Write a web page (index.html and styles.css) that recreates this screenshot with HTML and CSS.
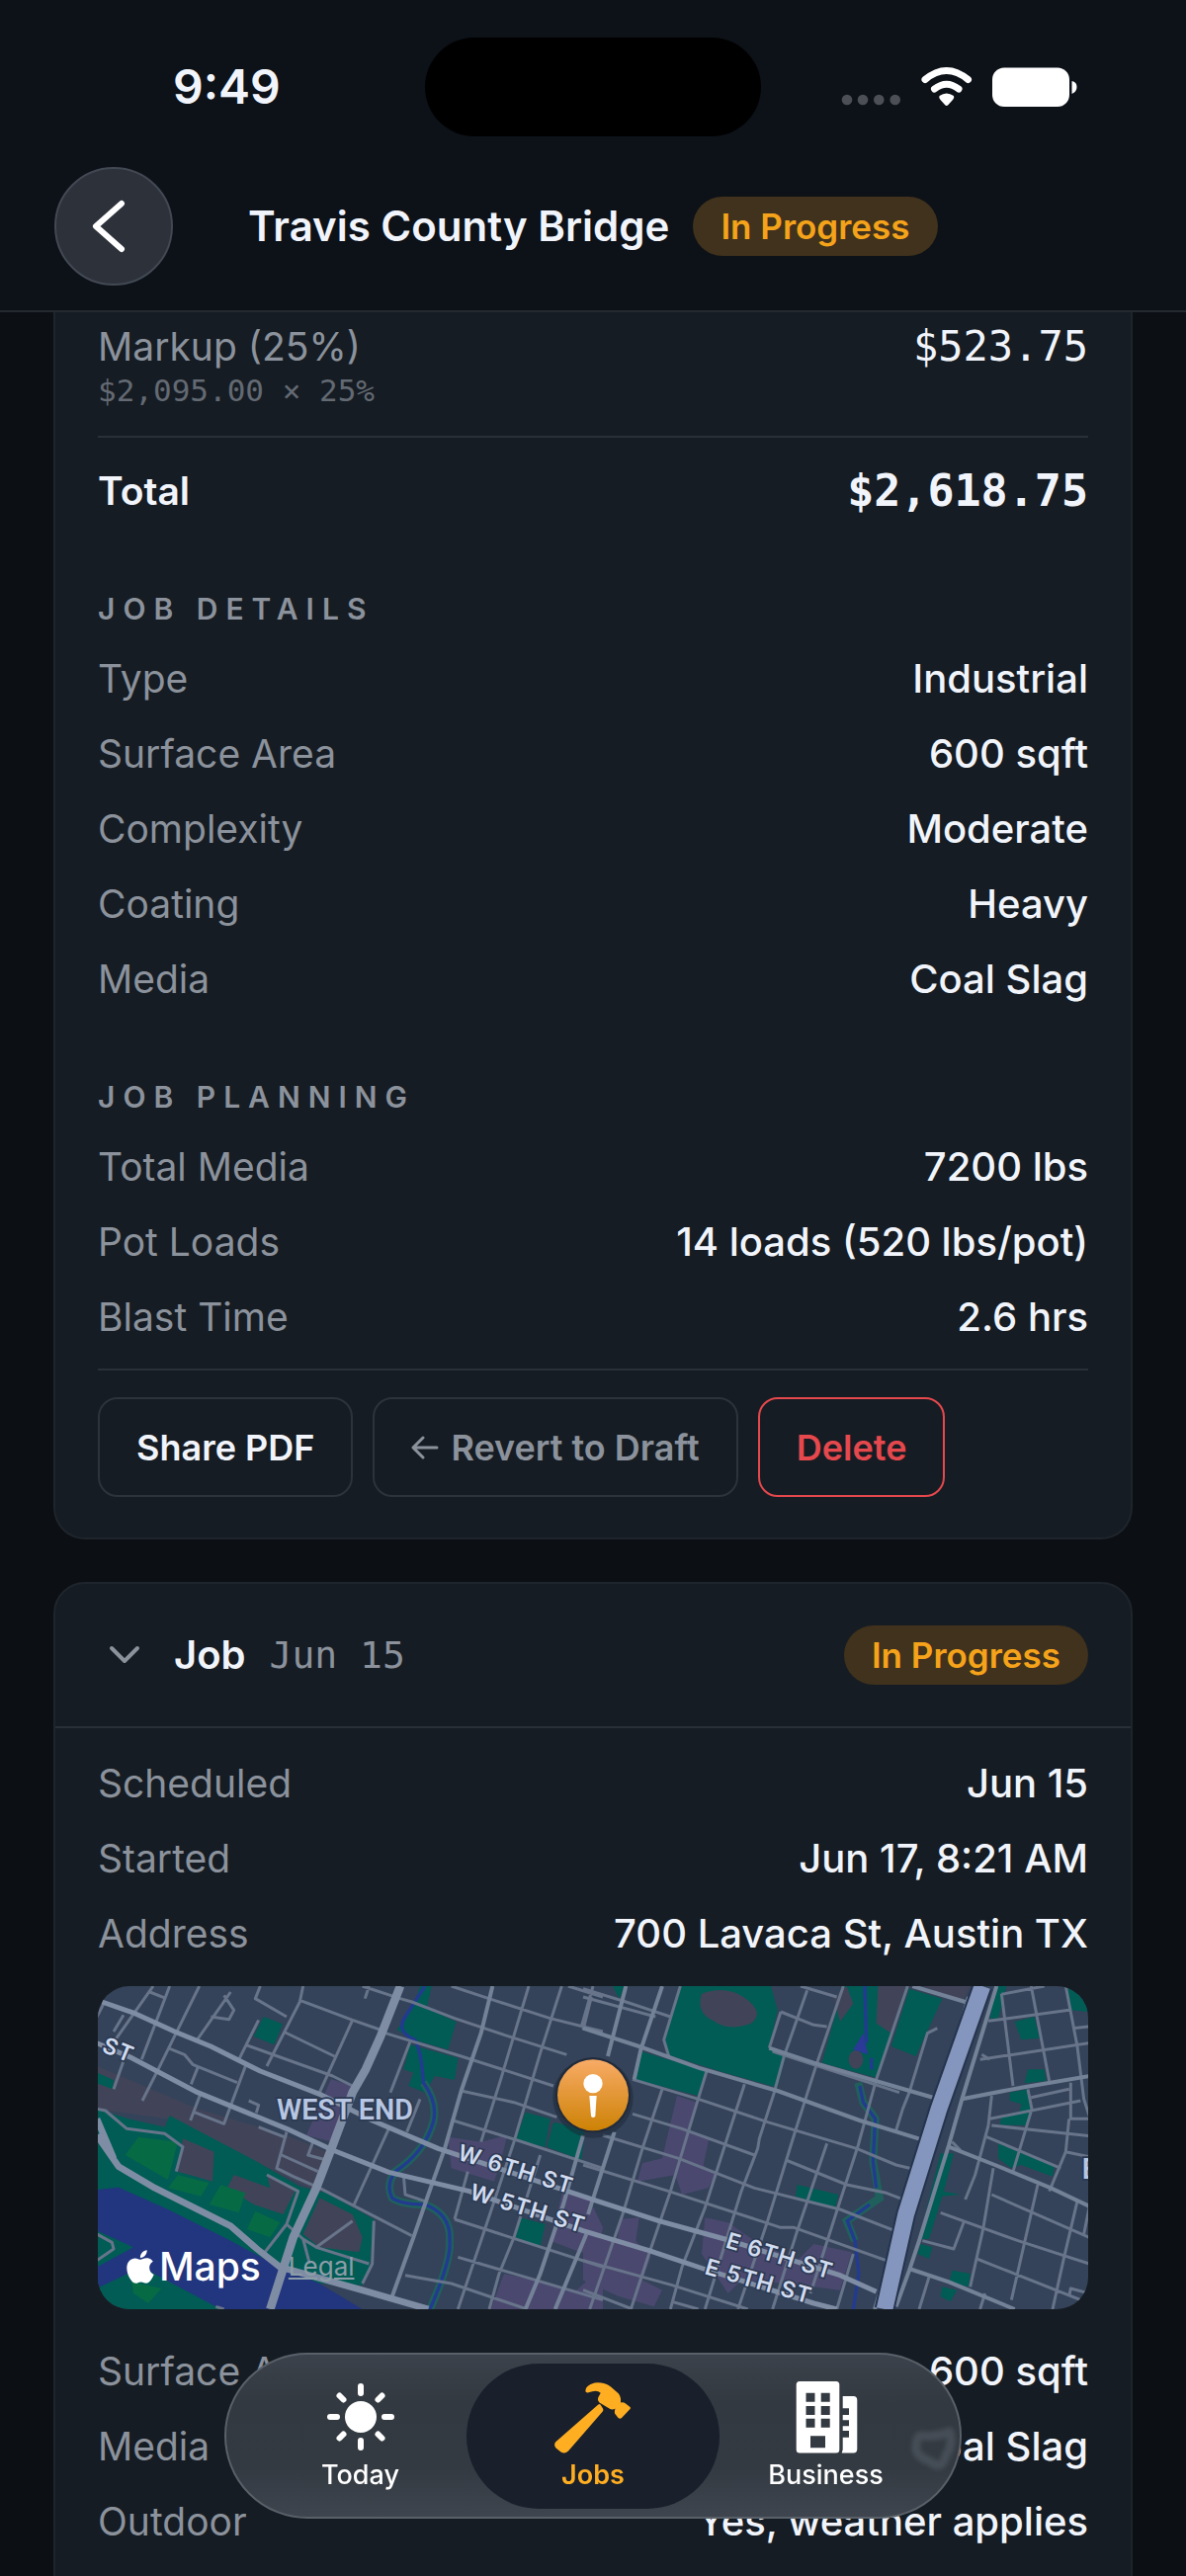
FILE: index.html
```html
<!DOCTYPE html>
<html lang="en">
<head>
    <meta charset="UTF-8">
    <meta name="viewport" content="width=device-width, initial-scale=1">
    <title>Travis County Bridge</title>
    <link rel="stylesheet" href="styles.css">
</head>
<body>
<header class="header">
    <div class="status">
        <span class="time">9:49</span>
        <span class="island"></span>
        <svg class="indicators" width="240" height="44" viewBox="0 0 240 44">
            <g fill="#4d4f57">
                <circle cx="7" cy="35" r="5.3"/><circle cx="23" cy="35" r="5.3"/><circle cx="39.3" cy="35" r="5.3"/><circle cx="55.7" cy="35" r="5.3"/>
            </g>
            <g fill="none" stroke="#fff" stroke-width="7" stroke-linecap="round">
                <path d="M86 14.5Q107.700 -3.500 129.500 14.500"/>
                <path d="M95.500 24Q107.700 14.500 120 24"/>
            </g>
            <path d="M100.500 31Q107.700 26 115 31Q116 33 114 35L109.500 40Q107.700 42 106 40L101.500 35Q99.500 33 100.500 31Z" fill="#fff"/>
            <rect x="154" y="2.500" width="78" height="39.500" rx="12" fill="#fff"/>
            <path d="M234.500 16Q239.500 17 239.500 22T234.500 29Z" fill="#fff"/>
        </svg>
    </div>
    <div class="titlebar">
        <button class="back" type="button" aria-label="Back">
            <svg width="40" height="56" viewBox="0 0 40 56" fill="none" stroke="#fff" stroke-width="6" stroke-linecap="round" stroke-linejoin="round"><path d="M31 5L5 28L31 51"/></svg>
        </button>
        <h1>Travis County Bridge</h1>
        <span class="badge">In Progress</span>
    </div>
</header>

<main>
    <section class="card quote">
        <dl>
            <div class="row"><dt>Markup (25%)</dt><dd class="mono">$523.75</dd></div>
        </dl>
        <p class="formula mono">$2,095.00 × 25%</p>
        <dl class="total">
            <div class="row"><dt>Total</dt><dd class="mono">$2,618.75</dd></div>
        </dl>

        <h2>Job Details</h2>
        <dl>
            <div class="row"><dt>Type</dt><dd>Industrial</dd></div>
            <div class="row"><dt>Surface Area</dt><dd>600 sqft</dd></div>
            <div class="row"><dt>Complexity</dt><dd>Moderate</dd></div>
            <div class="row"><dt>Coating</dt><dd>Heavy</dd></div>
            <div class="row"><dt>Media</dt><dd>Coal Slag</dd></div>
        </dl>

        <h2>Job Planning</h2>
        <dl>
            <div class="row"><dt>Total Media</dt><dd>7200 lbs</dd></div>
            <div class="row"><dt>Pot Loads</dt><dd>14 loads (520 lbs/pot)</dd></div>
            <div class="row"><dt>Blast Time</dt><dd>2.6 hrs</dd></div>
        </dl>

        <div class="actions">
            <button class="btn" type="button">Share PDF</button>
            <button class="btn btn-muted" type="button">
                <svg width="28" height="28" viewBox="0 0 28 28" fill="none" stroke="currentColor" stroke-width="3" stroke-linecap="round" stroke-linejoin="round"><path d="M26 14H3M12 4L2 14L12 24"/></svg>
                Revert to Draft
            </button>
            <button class="btn btn-danger" type="button">Delete</button>
        </div>
    </section>

    <section class="card job">
        <div class="job-head">
            <button class="toggle" type="button" aria-expanded="true">
                <svg width="32" height="20" viewBox="0 0 32 20" fill="none" stroke="#8b929c" stroke-width="4" stroke-linecap="round" stroke-linejoin="round"><path d="M3 3L16 16L29 3"/></svg>
                <span class="job-name">Job</span>
                <span class="job-date mono">Jun 15</span>
            </button>
            <span class="badge">In Progress</span>
        </div>
        <dl>
            <div class="row"><dt>Scheduled</dt><dd>Jun 15</dd></div>
            <div class="row"><dt>Started</dt><dd>Jun 17, 8:21 AM</dd></div>
            <div class="row"><dt>Address</dt><dd>700 Lavaca St, Austin TX</dd></div>
        </dl>

        <div class="map">
            <svg class="map-canvas" viewBox="24 27 3012 981" preserveAspectRatio="xMidYMid slice">
                <defs>
                    <linearGradient id="pin" x1="0" y1="0" x2="0" y2="1">
                        <stop offset="0" stop-color="#f8ab66"/>
                        <stop offset="1" stop-color="#cd8205"/>
                    </linearGradient>
                </defs>
                <rect x="24" y="27" width="3012" height="981" fill="#344359"/>

                <!-- west side: land use -->
                <g fill="#414459">
                    <path d="M24 270L330 400L600 480L720 530L690 650L240 430L24 400Z"/>
                </g>
                <g fill="#4b4870">
                    <path d="M735 310L800 330L740 500L660 480Z"/>
                    <path d="M1090 485L1190 500L1270 480L1250 560L1230 620L1100 580Z"/>
                    <path d="M1440 645L1520 675L1560 760L1540 850L1480 830L1400 800Z"/>
                    <path d="M1260 900L1480 950L1560 880V1008H1220Z"/>
                </g>
                <g fill="#005c55">
                    <path d="M24 400L120 430L230 455L245 420L340 470L510 560L640 635L720 655L865 735L850 900L830 935L700 930L640 1008H24Z"/>
                    <path d="M530 120L588 142L562 205L500 180Z"/>
                    <path d="M24 290L75 312L72 340L24 322Z"/>
                    <path d="M1005 27H1040L1025 95L1115 135L1090 220L985 190L935 160L985 85Z"/>
                    <path d="M975 205L1120 245L1110 312L1050 300L1020 350L970 330L985 290L955 280Z"/>
                    <path d="M1325 410L1400 430L1385 515L1295 495Z"/>
                    <path d="M1410 440L1505 460L1495 555L1390 515Z"/>
                    <path d="M1310 730L1385 750L1370 818L1295 790Z"/>
                </g>
                <g fill="#414459">
                    <path d="M285 490L380 530L375 620L340 610L270 590Z"/>
                    <path d="M440 600L550 640L540 600L625 650L590 720L500 690L420 640Z"/>
                    <path d="M700 670L800 720L830 790L820 835L700 820L650 780Z"/>
                </g>
                <g fill="#066a45">
                    <path d="M150 485L270 500L240 615L110 540Z"/>
                    <path d="M270 600L365 625L340 665L240 640Z"/>
                    <path d="M400 630L475 655L455 715L365 690Z"/>
                    <path d="M505 710L580 745L550 790L480 765Z"/>
                </g>
                <path d="M24 645L90 638L240 705L420 795L560 870L700 930L830 1008H400L235 920L160 880L24 945V880L135 820L24 770Z" fill="#22357f"/>
                <path d="M130 925L220 945L180 990L135 960Z" fill="#066a45"/>

                <!-- east side: land use -->
                <g transform="translate(1500)">
                    <g fill="#4b4870">
                        <path d="M285 360L345 380L320 470L382 490L365 570L400 600L380 640L300 660L280 600L165 620L180 565L240 550Z"/>
                        <path d="M0 790L105 800L110 735L170 730L160 800L205 850L180 920L240 950L215 1000L110 970L0 920Z"/>
                        <path d="M370 730L440 745L520 800L650 860L700 810L815 835L780 950L620 930L480 920L440 960L400 900L360 840Z"/>
                    </g>
                    <g fill="#005c55">
                        <path d="M290 27H570L590 100L565 215L615 240L590 335L430 290L255 235L245 185Z"/>
                        <path d="M175 225L375 285L350 360L155 310Z"/>
                        <path d="M790 27H985L890 305L725 260Z"/>
                        <path d="M990 35L1090 65L1010 240L935 210Z"/>
                        <path d="M1250 27H1285L1260 125L1235 125Z"/>
                        <path d="M1310 135L1370 120L1385 185L1330 190Z"/>
                        <path d="M1350 280L1400 280L1405 315L1340 322Z"/>
                        <path d="M1295 350L1350 340L1360 400L1350 450L1265 448L1270 425L1325 415L1330 385L1295 375Z"/>
                        <path d="M1260 505L1430 575L1425 605L1330 570L1300 580L1260 550Z"/>
                        <path d="M1465 27H1536V105L1480 100Z"/>
                        <path d="M650 630L775 660L765 700L645 665Z"/>
                        <path d="M1125 535L1095 650L1145 660L1090 665L1050 795L1020 795L1085 535Z"/>
                        <path d="M1025 810L1060 820L1050 855L1015 840Z"/>
                        <path d="M1120 890L1175 900L1170 940L1112 925Z"/>
                        <path d="M1090 940L1135 950L1115 985L1085 970Z"/>
                        <path d="M1050 480L960 760L985 720L1060 500Z"/>
                        <path d="M90 27H125L110 65Z"/>
                    </g>
                    <g fill="#414459">
                        <path d="M360 50Q440 20 500 70Q550 110 510 140Q440 165 400 135Q340 110 360 50Z"/>
                        <path d="M895 27H980L935 170L890 140Z"/>
                        <path d="M1030 27H1175L1150 75Z"/>
                        <path d="M760 60L800 27L820 80L780 135Z"/>
                    </g>
                    <ellipse cx="828" cy="250" rx="22" ry="28" fill="#414459"/>
                    <path d="M850 170L865 235L820 220Z" fill="#2a3a96"/>
                </g>

                <!-- creeks -->
                <g fill="none" stroke="#20605c" stroke-width="24">
                    <path d="M1015 320Q1060 380 1045 440Q1020 530 930 590Q900 630 920 670Q950 690 1020 690Q1100 720 1095 800Q1100 860 1035 1008"/>
                    <path d="M2335 320L2350 380L2387 430L2380 560L2400 670L2300 740L2325 800"/>
                </g>
                <g fill="none" stroke="#223b90" stroke-width="10">
                    <path d="M1020 27L960 120Q930 165 990 190Q1010 230 1015 320Q1060 380 1045 440Q1020 530 930 590Q900 630 920 670Q950 690 1020 690Q1100 720 1095 800Q1100 860 1035 1008"/>
                    <path d="M2355 27L2360 200M2375 245V280M2340 330L2350 380L2387 430L2380 560L2390 640M2370 690L2302 740L2325 800L2337 900L2320 1008"/>
                </g>

                <!-- side streets -->
                <g fill="none" stroke="#67748a" stroke-width="9" stroke-linejoin="round">
                    <path d="M195 27L80 190M245 27L160 250M335 27L210 280L162 375M430 45L325 195M410 55L440 100L425 128L370 120M650 27L640 75L540 270M515 130L455 250M475 270L410 445L320 410M520 27L505 65L600 120M640 70L800 130L900 165M800 130L700 350M590 165L745 240M475 205L740 300L800 330M240 215L290 235L315 265L450 320M330 275L310 325M340 350L308 435M105 115L75 165M185 45L235 65M110 240L75 340M24 120L45 80"/>
                    <path d="M485 375L515 388L508 412M515 455L600 488M600 470L570 580L620 605L700 640L980 785M585 540L695 590M680 500L665 540L720 555M540 600L635 650L600 750L530 840M975 195L915 350M910 460L805 690M1005 370L965 470M865 740L860 870L830 930M600 750L650 795L690 820L800 740M650 795L670 870M690 820L850 870M955 600L960 660L1020 680M24 400L50 405L115 460L230 475L285 515L265 590M24 780L70 805L75 825L24 860M385 1000L410 1008"/>
                    <path d="M850 27L838 65M830 27L945 65L980 75L1110 125L1260 175L1450 235M1100 27L1230 70L1400 125L1560 165M900 170L1130 240L1410 330M1130 345L1290 380L1420 425M1105 435L1300 495L1560 580M1110 735L1560 880M960 905L1100 930L1330 1008M1120 850L1560 980M1455 27L1560 60M1335 27L1250 310L1190 500M1150 590L1110 735M1435 27L1370 230L1290 500L1200 770L1120 1008M1530 27L1495 150M1370 540L1290 790L1245 900L1215 1008"/>
                    <path d="M1795 27L1745 190L1760 240M1875 285L1840 400L1765 650L1700 840L1645 1008M1990 325L1940 480L1870 700L1800 880L1765 1008M2110 240L2080 350L2035 490L2030 520L1980 650L1870 1008M2180 40L2110 240M2290 27L2210 260L2140 480L2060 740L1970 1008M2100 105L2065 215M2485 27L2390 310L2335 510L2270 710L2190 960M2320 840L2270 1008M2575 155L2545 170L2490 350L2470 400L2450 465M1740 340L1680 520L1620 720L1520 1008M2240 505L2150 770L2075 1008M1525 60L1500 160"/>
                    <path d="M1500 35L1630 75L1765 120M1500 60L1720 120M1650 310L1850 370L2060 440L2330 520L2450 570L2500 582M1650 415L1700 430L1800 460L2020 540M1560 480L1790 550L2020 640L2280 705L2460 775M2115 555L2300 630L2420 655L2485 680M1500 570L1760 650L2100 760L2140 760L2420 860M2100 105L2200 145L2240 150M2075 225L2460 350M2160 27L2220 45L2270 60M1500 860L1770 935L2000 1008M1500 950L1650 1008M1770 985L1850 1008"/>
                    <path d="M2770 50L2805 330M2860 27L2915 315M2965 27L3000 210L3020 370L3036 420M2770 52L2900 27M2730 133L2975 100M2705 250L3036 200M2710 235L2735 250M2985 155L3036 150M2740 360L2730 450L2690 600L2660 675M2740 450L3036 482M2735 430L3010 375M2860 365L2975 340M2980 320L2980 430H3036M2850 340L2862 400L2805 590M2725 485L2950 580M2975 430L2965 530L2915 650M2965 530L3036 545M2585 715L2820 800L3036 870M2745 580L2715 760L2675 940M2740 660L3036 790M2880 630L2800 980M3000 680L2960 850L2925 1008M2655 745L2625 825L2530 800M2695 855L3036 990M2550 910L2520 1008M3036 960L2980 945L2975 970M2620 500L2645 525M3036 700L3020 780M2720 960L2705 1008"/>
                </g>
                <g fill="none" stroke="#748298" stroke-width="12" stroke-linejoin="round">
                    <path d="M1225 27L1190 170L1130 345L1080 520L1030 660L985 790L920 970M1500 480L1440 690L1370 900L1325 1008M1510 780L1415 1008M1630 27L1575 240M1740 27L1675 220L1655 310M1595 470L1515 720"/>
                    <path d="M1500 155L1670 210L1850 275L2090 345L2340 435L2550 500M2065 215L2200 260L2440 330L2585 372M2650 370L2830 335L3036 300M2610 515L2750 570L2920 640L3036 695M2490 885L2610 925L2810 1008M2500 27L2660 75"/>
                    <path d="M2670 60L2585 370L2540 520L2480 700L2385 1008M2755 27L2650 370L2610 510L2520 800L2490 890L2450 1000"/>
                </g>

                <!-- main roads -->
                <g fill="none" stroke="#7f8da4" stroke-width="15" stroke-linejoin="round">
                    <path d="M40 75L140 110L260 165L370 210L520 285L700 355L860 435L1060 520L1560 685L1730 740L1930 795L2280 905L2390 955"/>
                    <path d="M24 200L130 245L330 350L600 460L740 525L910 592L1155 650L1500 770L1700 830L1865 885L2200 990L2270 1008"/>
                    <path d="M24 430L75 550M24 480L90 575L200 640L430 755L510 825L580 880L830 950L1030 1008" stroke-width="20"/>
                    <path d="M945 27L885 180L840 280L800 350L740 510L690 640L620 790L550 1008" stroke-width="26"/>
                </g>
                <path d="M2712 27L2580 400L2480 720L2415 1008" fill="none" stroke="#25344d" stroke-width="62"/>
                <path d="M2712 27L2580 400L2480 720L2415 1008" fill="none" stroke="#8496bd" stroke-width="50"/>

                <g class="map-label">
                    <text class="district" x="570" y="432">WEST END</text>
                    <text transform="translate(36 225) rotate(22)">ST</text>
                    <text transform="translate(1115 553) rotate(17)">W 6TH ST</text>
                    <text transform="translate(1152 672) rotate(17)">W 5TH ST</text>
                    <text transform="translate(1930 820) rotate(17)">E 6TH ST</text>
                    <text transform="translate(1866 900) rotate(16)">E 5TH ST</text>
                    <text class="district" x="3014" y="612">E</text>
                </g>

                <circle cx="1530" cy="366" r="122" fill="#1b2636" opacity=".5"/>
                <circle cx="1530" cy="358" r="114" fill="#202a3a"/>
                <circle cx="1530" cy="358" r="108" fill="url(#pin)"/>
                <circle cx="1530" cy="323" r="29" fill="#fff"/>
                <path d="M1519 360H1541L1537 422Q1530 430 1524 422Z" fill="#fff"/>
            </svg>
            <div class="map-credit">
                <span class="map-brand">
                    <svg width="28" height="34" viewBox="2 0 20 24" fill="#fff"><path d="M12.152 6.896c-.948 0-2.415-1.078-3.960-1.040-2.040.027-3.910 1.183-4.961 3.014-2.117 3.675-.546 9.103 1.519 12.090 1.013 1.454 2.208 3.090 3.792 3.039 1.520-.065 2.090-.987 3.935-.987 1.831 0 2.350.987 3.960.948 1.637-.026 2.676-1.480 3.676-2.948 1.156-1.688 1.636-3.325 1.662-3.415-.039-.013-3.182-1.221-3.220-4.857-.026-3.040 2.480-4.494 2.597-4.559-1.429-2.090-3.623-2.324-4.390-2.376-2-.156-3.675 1.090-4.610 1.090zM15.530 3.830c.843-1.012 1.400-2.427 1.245-3.830-1.207.052-2.662.805-3.532 1.818-.780.896-1.454 2.338-1.273 3.714 1.338.104 2.715-.688 3.559-1.701"/></svg>
                    Maps
                </span>
                <a href="#">Legal</a>
            </div>
        </div>

        <dl>
            <div class="row"><dt>Surface Area</dt><dd>600 sqft</dd></div>
            <div class="row"><dt>Media</dt><dd>Coal Slag</dd></div>
            <div class="row"><dt>Outdoor</dt><dd>Yes, weather applies</dd></div>
        </dl>
    </section>
</main>

<nav class="tabbar">
    <a class="tab" href="#">
        <svg width="76" height="76" viewBox="0 0 76 76" stroke="currentColor" stroke-width="6" stroke-linecap="round">
            <circle cx="38" cy="38" r="16" fill="currentColor" stroke="none"/>
            <path d="M38 7V14M38 62V69M7 38H14M62 38H69M16.500 16.500L20.500 20.500M55.500 55.500L59.500 59.500M16.500 59.500L20.500 55.500M55.500 20.500L59.500 16.500"/>
        </svg>
        Today
    </a>
    <a class="tab active" href="#">
        <svg width="76" height="76" viewBox="0 0 76 76" fill="currentColor">
            <path d="M43.300 25.500Q44.500 24.500 45.500 25.500L48 29.500Q49 31 47.800 32.500L13 72.500Q9.500 76 5.500 73.500L.5 69.500Q-2 66.500 0 63.500Z"/>
            <path d="M30.300 12Q30 6 39.700 3.500Q49 2.500 56 7.500L64 14.500Q66.500 18 66 23.500Q68.500 22.500 71 24.500L75.500 28Q76.500 29 75.500 30L67 39Q65.500 40.500 63.500 39L60 34.500Q59.500 32 60.500 29.500Q57.500 31.500 54.500 29.500L44.500 23.500Q42 21 43.200 18.500L45.700 13.700Q42 10 33.500 13.300Q31 14 30.300 12Z"/>
        </svg>
        Jobs
    </a>
    <a class="tab" href="#">
        <svg width="76" height="76" viewBox="0 0 76 76" fill="currentColor" fill-rule="evenodd">
            <path d="M11 2H48Q51.300 2 51.300 5.500V71Q51.300 74.500 48 74.500H11Q7.700 74.500 7.700 71V5.500Q7.700 2 11 2ZM17.500 13.700V22.700H26.500V13.700ZM32.700 13.700V22.700H41.700V13.700ZM17.500 27V36H26.500V27ZM32.700 27V36H41.700V27ZM17.500 39.700V48.700H26.500V39.700ZM32.700 39.700V48.700H41.700V39.700ZM22 57.300V69.300H37V57.300Z"/>
            <path d="M54.700 17H65.500Q69.300 17 69.300 21V70.500Q69.300 74.500 65.500 74.500H53.700L54.700 71V58.700H61V52H54.700V47.200H61V41.300H54.700V36H61V29.300H54.700Z"/>
        </svg>
        Business
    </a>
    <svg class="glint" width="52" height="56" viewBox="0 0 52 56" fill="none" stroke="#58616b" stroke-width="9" stroke-linejoin="round"><path d="M12 10Q28 12 42 6Q46 18 38 30Q34 46 22 36Q6 30 8 20Q8 12 12 10Z"/></svg>
</nav>
</body>
</html>
```

FILE: styles.css
```css
* {
    box-sizing: border-box;
}

html, body {
    height: 100%;
    margin: 0;
    overflow: hidden;
}

body {
    background-color: #0c0f14;
    color: #f1f5fb;
    font-family: Inter, "Liberation Sans", sans-serif;
    font-size: 40px;
    line-height: 44px;
}

h1, h2, p, dl, dd {
    margin: 0;
}

button {
    font: inherit;
    color: inherit;
    background: none;
    border: 0;
    padding: 0;
}

.mono {
    font-family: "DejaVu Sans Mono", "Liberation Mono", monospace;
}

/* header */
.header {
    padding-bottom: 25px;
    background-color: #0d1118;
    border-bottom: 2px solid #24282f;
}

.status {
    display: grid;
    grid-template-columns: 1fr 340px 1fr;
    align-items: center;
    padding: 38px 110px 0;
}

.time {
    padding-left: 65px;
    font-size: 48px;
    font-weight: 600;
}

.island {
    height: 100px;
    border-radius: 50px;
    background-color: #000;
}

.indicators {
    justify-self: end;
}

.titlebar {
    display: flex;
    align-items: center;
    margin-top: 31px;
    padding: 0 55px;
}

.back {
    display: flex;
    align-items: center;
    justify-content: center;
    width: 120px;
    height: 120px;
    padding-right: 6px;
    margin-right: 76px;
    border: 2px solid #434953;
    border-radius: 50%;
    background-color: #2c313a;
}

.titlebar h1 {
    margin-right: 24px;
    font-size: 42px;
    font-weight: 600;
}

.badge {
    padding: 8px 28px;
    border-radius: 30px;
    background-color: #40321c;
    color: #f5a31a;
    font-size: 35px;
    font-weight: 600;
}

/* cards */
main {
    padding: 0 54px;
}

.card {
    padding: 0 43px;
    border: 2px solid #1f252c;
    border-radius: 32px;
    background-color: #161c23;
}

.quote {
    padding-bottom: 41px;
    border-top: 0;
    border-radius: 0 0 32px 32px;
}

.row {
    display: flex;
    justify-content: space-between;
    padding: 16px 0;
}

.row dt {
    color: #8b929c;
    font-size: 39px;
}

.row dd {
    font-weight: 500;
}

.quote > dl:first-child .row {
    padding: 13px 0 0;
}

.row .mono {
    font-size: 42px;
    font-weight: 400;
}

.formula {
    padding-bottom: 24px;
    border-bottom: 2px solid #2a3037;
    color: #636a73;
    font-size: 31px;
}

.total {
    padding-top: 16px;
}

.total .row dt {
    color: #f1f5fb;
    font-weight: 600;
}

.total .row .mono {
    font-size: 45px;
    font-weight: 700;
}

.card h2 {
    margin: 59px 0 11px;
    color: #8b929c;
    font-size: 30px;
    font-weight: 600;
    letter-spacing: 8px;
    text-transform: uppercase;
}

.actions {
    display: flex;
    gap: 20px;
    margin-top: 14px;
    padding-top: 27px;
    border-top: 2px solid #2a3037;
}

.btn {
    display: flex;
    align-items: center;
    gap: 12px;
    height: 101px;
    padding: 0 37px;
    border: 2px solid #2d333b;
    border-radius: 20px;
    font-size: 36px;
    font-weight: 600;
}

.btn-muted {
    color: #8b929c;
}

.btn-danger {
    border-color: #e5484d;
    color: #e5484d;
}

/* job card */
.job {
    margin-top: 43px;
    padding-bottom: 60px;
}

.job-head {
    display: flex;
    align-items: center;
    justify-content: space-between;
    height: 146px;
    margin: 0 -43px 18px;
    padding: 0 43px;
    border-bottom: 2px solid #2a3037;
}

.toggle {
    display: flex;
    align-items: center;
    padding-left: 11px;
}

.job-name {
    margin: 0 24px 0 34px;
    font-weight: 600;
}

.job-date {
    color: #8b929c;
    font-size: 38px;
}

.map {
    position: relative;
    height: 327px;
    margin: 15px 0 25px;
    border-radius: 32px;
    overflow: hidden;
}

.map-canvas {
    display: block;
    width: 100%;
    height: 100%;
}

.map-label {
    fill: #d2dcf0;
    stroke: #2c3a52;
    stroke-width: 10px;
    paint-order: stroke;
    font-family: Inter, sans-serif;
    font-size: 68px;
    font-weight: 600;
    letter-spacing: 4px;
}

.map-label .district {
    fill: #b7c6e2;
    font-family: "Liberation Sans Narrow", Roboto, sans-serif;
    font-size: 86px;
    font-weight: 600;
    letter-spacing: 0;
}

.map-credit {
    position: absolute;
    left: 29px;
    bottom: 21px;
    display: flex;
    align-items: center;
    gap: 28px;
}

.map-brand {
    display: flex;
    align-items: center;
    gap: 5px;
    color: #fff;
    font-size: 39px;
    font-weight: 500;
}

.map-credit a {
    color: #8d9da8;
    font-size: 26px;
}

/* tab bar */
.tabbar {
    position: fixed;
    left: 50%;
    bottom: 58px;
    display: flex;
    align-items: center;
    justify-content: center;
    width: 746px;
    height: 168px;
    transform: translateX(-50%);
    border: 2px solid #596068;
    border-radius: 84px;
    background: linear-gradient(#3b424b, #333940 30%, #333a42 70%, #3e454e);
}

.tab {
    display: flex;
    flex-direction: column;
    align-items: center;
    justify-content: center;
    gap: 3px;
    width: 235px;
    height: 147px;
    color: #fff;
    font-size: 27px;
    font-weight: 500;
    line-height: 36px;
    text-decoration: none;
}

.tab svg {
    overflow: visible;
}

.tab.active {
    width: 256px;
    margin: 0 -10px;
    border-radius: 74px;
    background-color: #19202b;
    color: #ffae22;
    font-weight: 600;
}

.glint {
    position: absolute;
    right: 0;
    top: 72px;
    opacity: .5;
    filter: blur(2px);
}
```
